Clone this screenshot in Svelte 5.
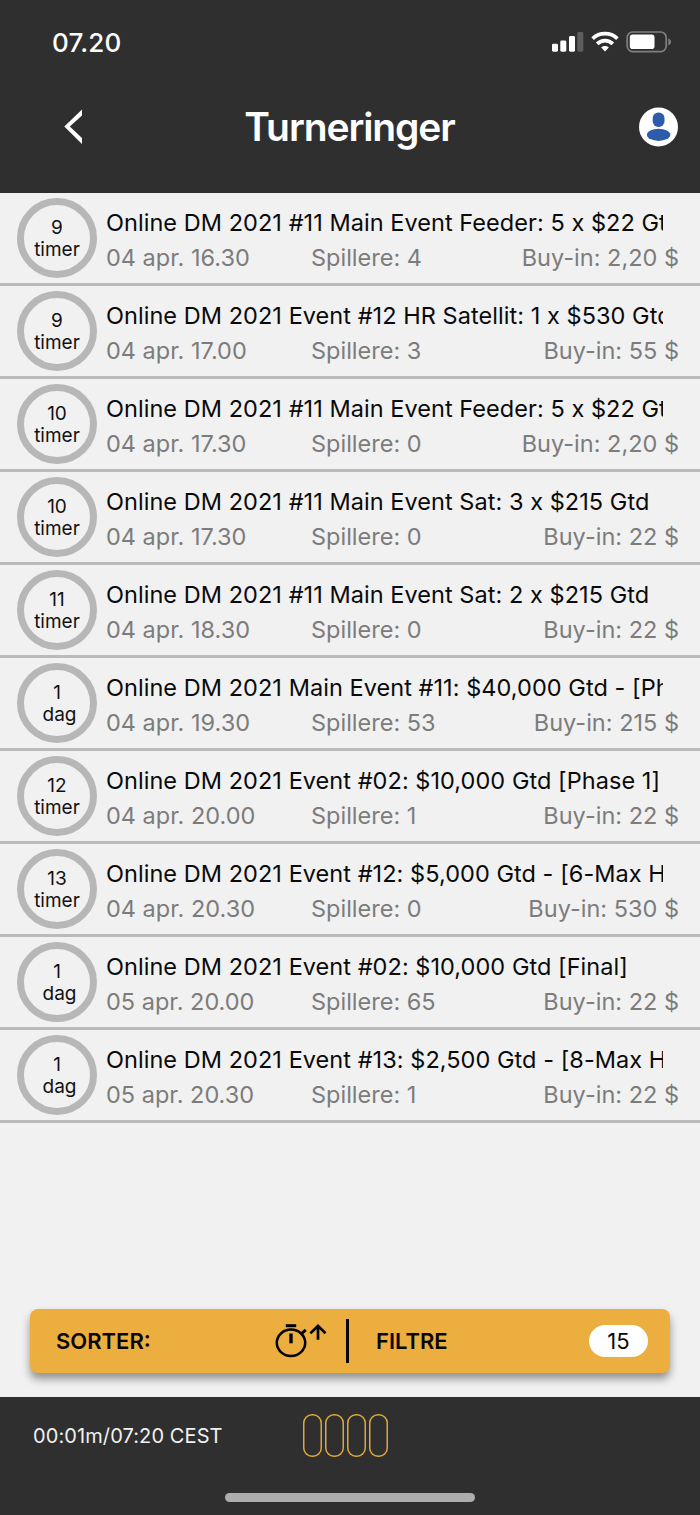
<script lang="ts">
    type Tournament = {
        count: number;
        unit: string;
        name: string;
        start: string;
        players: number;
        buyIn: string;
    };

    const tournaments: Tournament[] = [
        { count: 9, unit: 'timer', name: 'Online DM 2021 #11 Main Event Feeder: 5 x $22 Gtd', start: '04 apr. 16.30', players: 4, buyIn: '2,20' },
        { count: 9, unit: 'timer', name: 'Online DM 2021 Event #12 HR Satellit: 1 x $530 Gtd', start: '04 apr. 17.00', players: 3, buyIn: '55' },
        { count: 10, unit: 'timer', name: 'Online DM 2021 #11 Main Event Feeder: 5 x $22 Gtd', start: '04 apr. 17.30', players: 0, buyIn: '2,20' },
        { count: 10, unit: 'timer', name: 'Online DM 2021 #11 Main Event Sat: 3 x $215 Gtd', start: '04 apr. 17.30', players: 0, buyIn: '22' },
        { count: 11, unit: 'timer', name: 'Online DM 2021 #11 Main Event Sat: 2 x $215 Gtd', start: '04 apr. 18.30', players: 0, buyIn: '22' },
        { count: 1, unit: 'dag', name: 'Online DM 2021 Main Event #11: $40,000 Gtd - [Phase 1]', start: '04 apr. 19.30', players: 53, buyIn: '215' },
        { count: 12, unit: 'timer', name: 'Online DM 2021 Event #02: $10,000 Gtd [Phase 1]', start: '04 apr. 20.00', players: 1, buyIn: '22' },
        { count: 13, unit: 'timer', name: 'Online DM 2021 Event #12: $5,000 Gtd - [6-Max HR]', start: '04 apr. 20.30', players: 0, buyIn: '530' },
        { count: 1, unit: 'dag', name: 'Online DM 2021 Event #02: $10,000 Gtd [Final]', start: '05 apr. 20.00', players: 65, buyIn: '22' },
        { count: 1, unit: 'dag', name: 'Online DM 2021 Event #13: $2,500 Gtd - [8-Max HR]', start: '05 apr. 20.30', players: 1, buyIn: '22' },
    ];

    const tables = [1, 2, 3, 4];
</script>

<div class="screen">
    <header>
        <div class="status">
            <span class="clock">07.20</span>
            <svg class="status-icons" width="122" height="24" viewBox="0 0 122 24">
                <g fill="#fff">
                    <rect x="2" y="13.7" width="6" height="8" rx="1.4" />
                    <rect x="10.3" y="10.5" width="6" height="11.2" rx="1.4" />
                    <rect x="19" y="6" width="6" height="15.7" rx="1.4" />
                    <rect x="27.3" y="2" width="6" height="19.7" rx="1.4" fill="#5d5d5d" />
                    <path d="M55 16.1c1.5 0 2.8.5 3.8 1.5L55 21.600l-3.800-4c1-1 2.300-1.500 3.800-1.500z" />
                </g>
                <g fill="none" stroke="#fff" stroke-width="3.700">
                    <path d="M42.600 8.600a18 18 0 0 1 24.800 0" />
                    <path d="M47.200 13.900a11 11 0 0 1 15.600 0" />
                </g>
                <rect x="77.200" y="2" width="39" height="19.600" rx="5.500" fill="none" stroke="#808080" stroke-width="1.700" />
                <rect x="79.800" y="4.500" width="24.700" height="14.600" rx="2.800" fill="#fff" />
                <path d="M118.300 8.300q2.800 1 2.800 3.600t-2.800 3.600z" fill="#808080" />
            </svg>
        </div>
        <div class="title-bar">
            <button class="back" aria-label="Tilbage">
                <svg width="20" height="36" viewBox="0 0 20 36">
                    <path d="M19 .5v6L6.800 17.500 19 29v6L1.300 17.500z" fill="#fff" />
                </svg>
            </button>
            <h1>Turneringer</h1>
            <button class="profile" aria-label="Profil">
                <svg width="40" height="40" viewBox="0 0 40 40">
                    <circle cx="19.500" cy="20" r="19.500" fill="#fff" />
                    <rect x="13.700" y="5.500" width="11.800" height="14.400" rx="5.600" fill="#2e5cab" />
                    <ellipse cx="19.600" cy="27.800" rx="11.700" ry="6.100" fill="#2e5cab" />
                </svg>
            </button>
        </div>
    </header>

    <main>
        <ul>
            {#each tournaments as t}
                <li>
                    <div class="countdown">
                        <span>{t.count}</span>
                        <span class:day={t.unit === 'dag'}>{t.unit}</span>
                    </div>
                    <div class="info">
                        <div class="name">{t.name}</div>
                        <div class="details">
                            <span>{t.start}</span>
                            <span>Spillere: {t.players}</span>
                            <span class="buy-in">Buy-in: {t.buyIn} $</span>
                        </div>
                    </div>
                </li>
            {/each}
        </ul>

        <div class="toolbar">
            <button class="sort">
                <span>SORTER:</span>
                <svg width="54" height="36" viewBox="0 0 54 36" fill="none" stroke="#000">
                    <ellipse cx="18" cy="19.800" rx="14.200" ry="13.200" stroke-width="2.500" />
                    <path d="M12.800 2.700h10.400" stroke-width="3" />
                    <path d="M18 10.500v9.800" stroke-width="3.400" />
                    <path d="M28.200 10.800l4.600-4" stroke-width="3" />
                    <path d="M45 16.800V3M37.400 10.400L45 2.900l7.500 7.400" stroke-width="2.700" />
                </svg>
            </button>
            <button class="filter">
                <span>FILTRE</span>
                <span class="count">15</span>
            </button>
        </div>
    </main>

    <footer>
        <div class="footer-row">
            <span class="time">00:01m/07:20 CEST</span>
            <div class="tables">
                {#each tables as table}
                    <i></i>
                {/each}
            </div>
        </div>
        <div class="home-bar"></div>
    </footer>
</div>

<style>
    :global(body) {
        margin: 0;
    }

    .screen {
        display: flex;
        flex-direction: column;
        width: 700px;
        height: 1515px;
        background: #f1f1f1;
        font-family: Inter, sans-serif;
        overflow: hidden;
    }

    header {
        height: 193px;
        background: #2f2f2f;
        color: #fff;
    }

    .status {
        display: flex;
        justify-content: space-between;
        height: 64px;
        padding: 30px 28px 0 52px;
        box-sizing: border-box;
    }

    .clock {
        font-size: 26px;
        font-weight: 500;
        line-height: 25px;
        letter-spacing: 0.2px;
    }

    .title-bar {
        display: flex;
        align-items: center;
        justify-content: space-between;
        height: 126px;
        padding: 0 21px 0 63px;
    }

    button {
        display: flex;
        align-items: center;
        padding: 0;
        border: none;
        background: none;
        font: inherit;
        color: inherit;
    }

    .back {
        width: 40px;
    }

    h1 {
        margin: 0;
        padding-right: 43px;
        flex: 1;
        text-align: center;
        font-size: 39px;
        font-weight: 600;
        line-height: 48px;
        letter-spacing: -1.1px;
    }

    main {
        display: flex;
        flex-direction: column;
        justify-content: space-between;
        height: 1204px;
    }

    ul {
        margin: 0;
        padding: 0;
        list-style: none;
    }

    li {
        display: flex;
        height: 93px;
        padding: 5px 21px 0 17px;
        box-sizing: border-box;
        border-bottom: 3px solid #bababa;
    }

    .countdown {
        display: flex;
        flex-direction: column;
        align-items: center;
        flex: none;
        width: 80px;
        height: 80px;
        padding-top: 12px;
        box-sizing: border-box;
        border: 7px solid #b7b7b7;
        border-radius: 50%;
        color: #111;
        font-size: 19px;
        line-height: 22px;
    }

    .day {
        padding-left: 5px;
    }

    .info {
        flex: 1;
        min-width: 0;
        padding-left: 9px;
    }

    .name {
        width: 557px;
        overflow: hidden;
        white-space: nowrap;
        color: #0a0a0a;
        font-size: 23.5px;
        line-height: 30px;
        letter-spacing: 0.05px;
        padding-top: 10px;
    }

    .details {
        display: grid;
        grid-template-columns: 205px 1fr auto;
        padding-top: 5px;
        color: #7c7c7c;
        font-size: 23.5px;
        line-height: 30px;
    }

    .toolbar {
        display: flex;
        align-items: center;
        height: 64px;
        margin: 0 30px 24px;
        border-radius: 8px;
        background: #ecae3f;
        box-shadow: 0 6px 9px rgba(0, 0, 0, 0.4);
        color: #0a0702;
        font-size: 22px;
        font-weight: 600;
    }

    .sort {
        justify-content: space-between;
        width: 319px;
        height: 44px;
        padding: 0 19px 0 26px;
        box-sizing: border-box;
        border-right: 3px solid #0a0702;
    }

    .filter {
        flex: 1;
        justify-content: space-between;
        padding: 0 22px 0 27px;
    }

    .count {
        width: 59px;
        border-radius: 16px;
        background: #fff;
        font-weight: 400;
        line-height: 32px;
        text-align: center;
    }

    footer {
        flex: 1;
        display: flex;
        flex-direction: column;
        align-items: center;
        background: #2f2f2f;
    }

    .footer-row {
        display: flex;
        align-items: center;
        width: 100%;
        height: 77px;
        padding-left: 33px;
        box-sizing: border-box;
    }

    .time {
        width: 270px;
        color: #f1f1f1;
        font-size: 20px;
        letter-spacing: 0.1px;
    }

    .tables {
        display: flex;
        gap: 3px;
    }

    .tables i {
        width: 19px;
        height: 43px;
        border-radius: 9px;
        box-shadow: inset 0 0 0 1.5px #e0a73c;
    }

    .home-bar {
        width: 250px;
        height: 9px;
        margin-top: 19px;
        border-radius: 5px;
        background: #adadad;
    }
</style>
